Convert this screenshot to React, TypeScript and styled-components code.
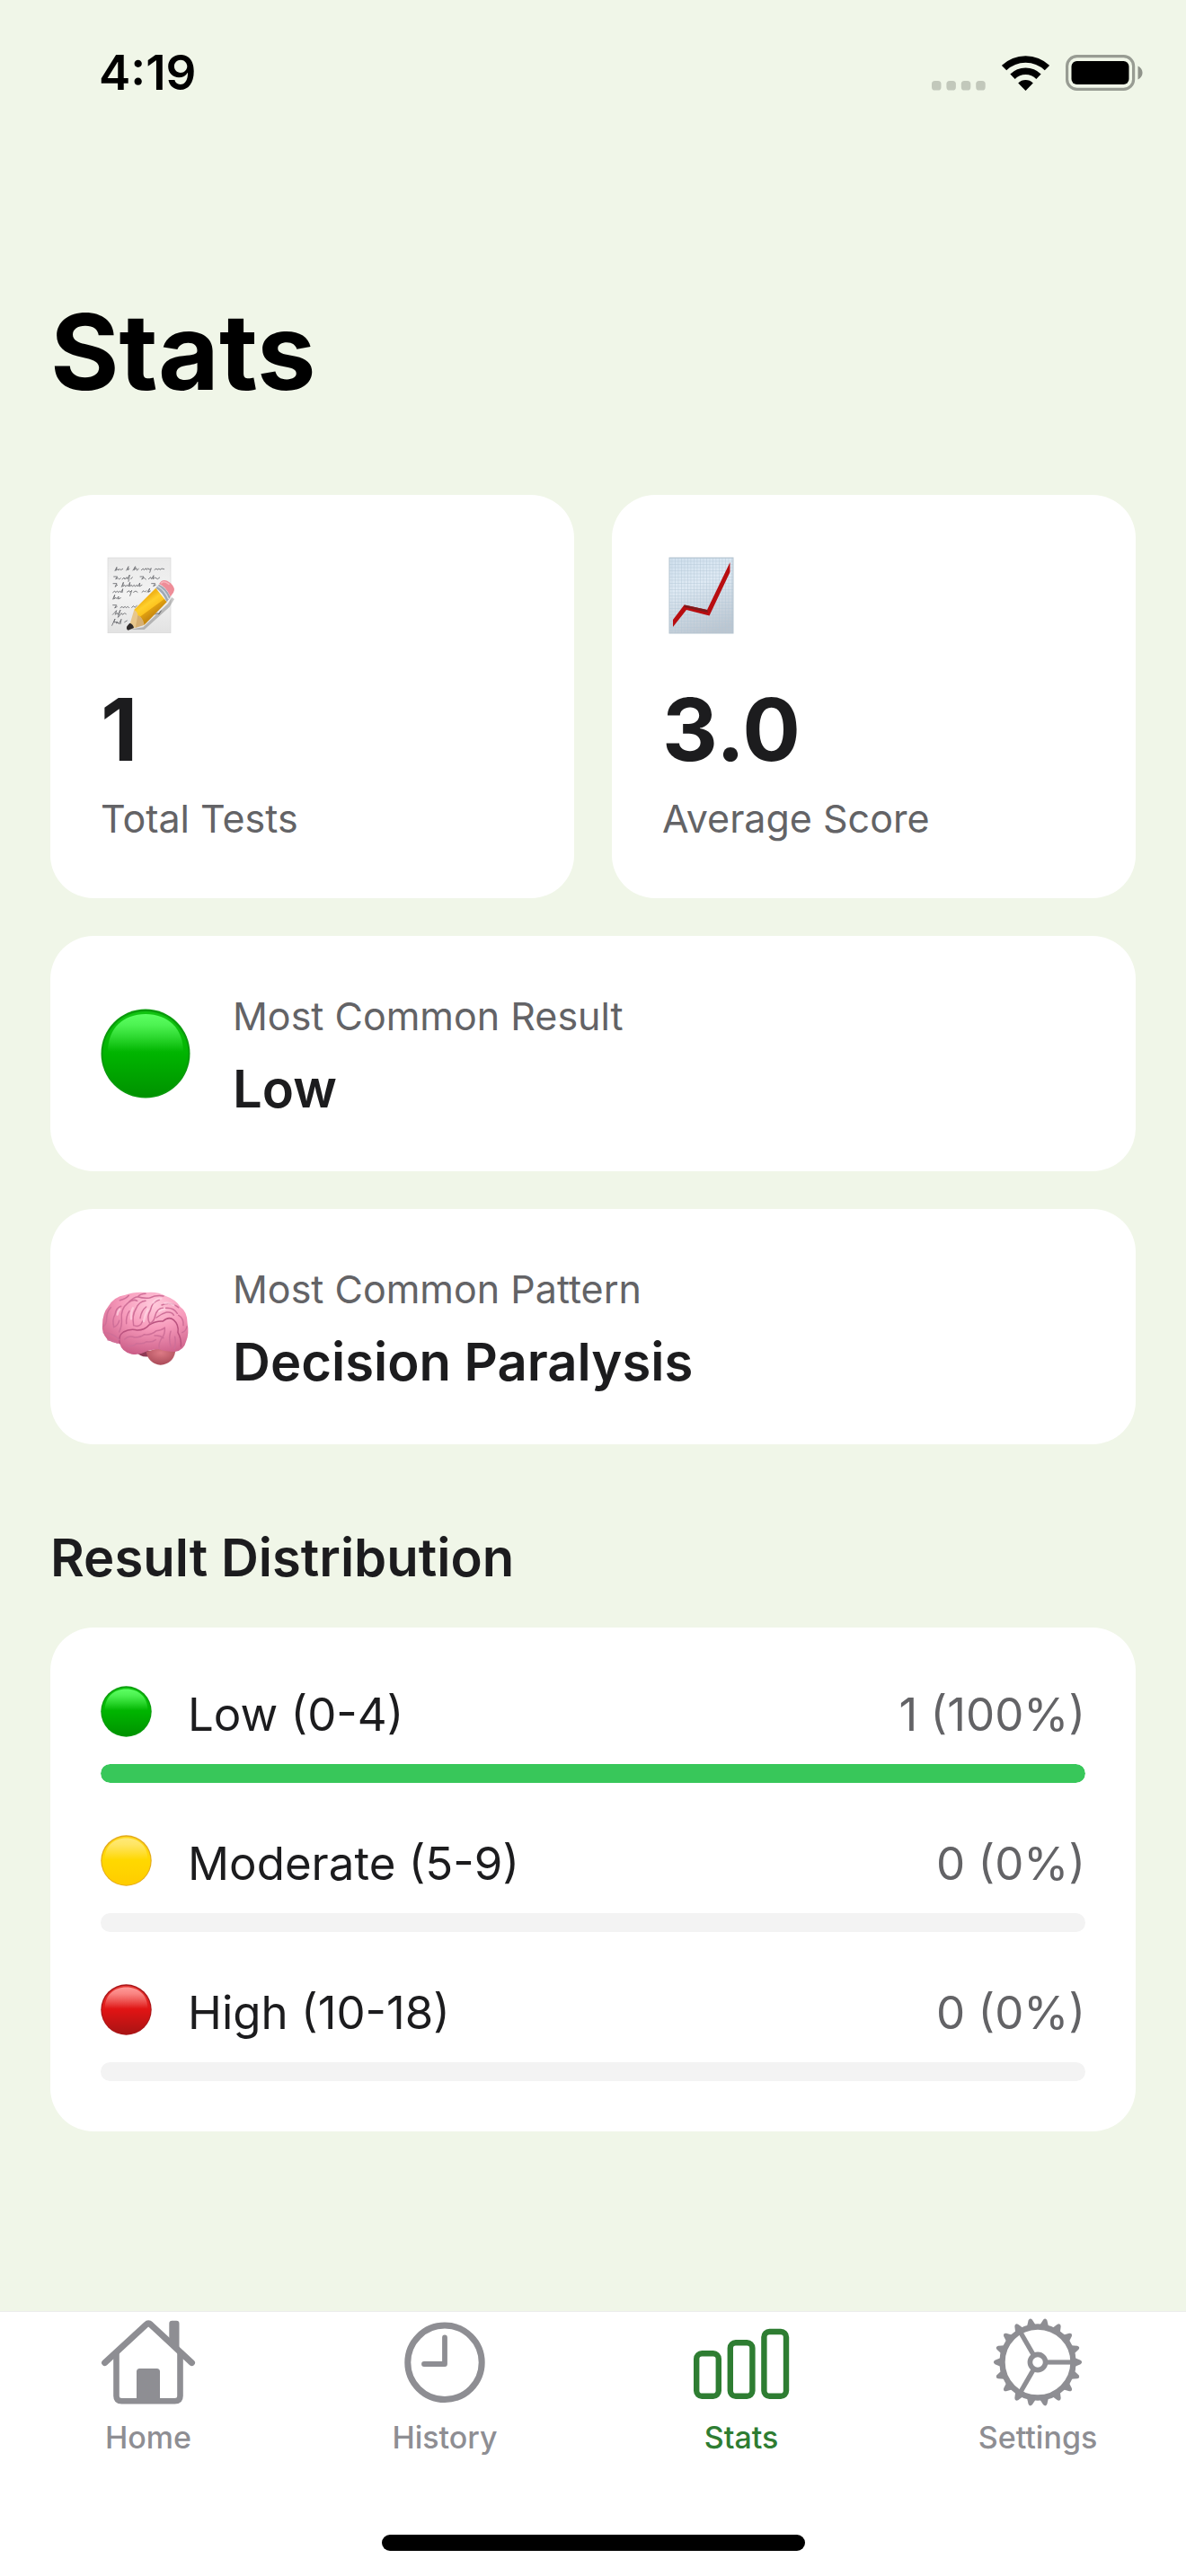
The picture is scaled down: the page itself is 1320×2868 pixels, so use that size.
import React, { useId } from "react";
import styled, { createGlobalStyle } from "styled-components";

const color = {
  page: "#f0f6e8",
  card: "#ffffff",
  ink: "#1c1c1e",
  muted: "#636366",
  track: "#f3f3f3",
  tab: "#8e8e93",
  accent: "#2e7d32",
};

const GlobalStyle = createGlobalStyle`
  *, *::before, *::after { box-sizing: border-box; }
  body {
    margin: 0;
    background: ${color.page};
    color: ${color.ink};
    font-family: Inter, "Liberation Sans", sans-serif;
  }
  svg { display: block; flex: none; }
`;

const Screen = styled.div`
  min-height: 100vh;
  display: flex;
  flex-direction: column;
`;

const StatusBar = styled.header`
  height: 162px;
  padding: 0 48px 0 110px;
  display: flex;
  align-items: center;
  justify-content: space-between;
`;

const Clock = styled.time`
  font-size: 53px;
  line-height: 64px;
  font-weight: 600;
  color: #000;
`;

const StatusIcons = styled.div`
  display: flex;
  align-items: center;
  gap: 18px;
`;

const Content = styled.main`
  flex: 1;
  padding: 160px 56px 56px;
  display: flex;
  flex-direction: column;
  gap: 42px;
`;

const PageTitle = styled.h1`
  margin: 0 0 47px;
  font-size: 117px;
  line-height: 140px;
  font-weight: 700;
  color: #000;
`;

const Card = styled.section`
  background: ${color.card};
  border-radius: 48px;
  padding: 56px;
`;

const StatGrid = styled.div`
  display: grid;
  grid-template-columns: 1fr 1fr;
  gap: 42px;
`;

const StatIcon = styled.div`
  margin-bottom: 36px;
`;

const StatValue = styled.div`
  font-size: 96px;
  line-height: 115px;
  font-weight: 700;
  margin-bottom: 8px;
`;

const Caption = styled.div`
  font-size: 43px;
  line-height: 66px;
  color: ${color.muted};
`;

const HighlightCard = styled(Card)`
  display: flex;
  align-items: center;
  gap: 47px;
`;

const HighlightText = styled.div`
  display: flex;
  flex-direction: column;
  gap: 12px;
`;

const HighlightValue = styled.div`
  font-size: 58px;
  line-height: 72px;
  font-weight: 600;
`;

const SectionTitle = styled.h2`
  margin: 48px 0 0;
  font-size: 58px;
  line-height: 72px;
  font-weight: 600;
`;

const Distribution = styled.ul`
  margin: 0;
  padding: 0;
  list-style: none;
  display: flex;
  flex-direction: column;
  gap: 49px;
`;

const LevelRow = styled.li`
  display: flex;
  flex-direction: column;
  gap: 14px;
`;

const LevelHeader = styled.div`
  display: flex;
  align-items: center;
  gap: 40px;
  font-size: 51px;
  line-height: 82px;
`;

const LevelCount = styled.span`
  margin-left: auto;
  color: ${color.muted};
`;

const Track = styled.div`
  height: 21px;
  border-radius: 11px;
  background: ${color.track};
  overflow: hidden;
`;

const Fill = styled.div<{ $color: string }>`
  height: 100%;
  border-radius: 11px;
  background: ${(p) => p.$color};
`;

const BottomBar = styled.footer`
  background: #fff;
  border-top: 1px solid #ececec;
  padding: 4px 0 28px;
  display: flex;
  flex-direction: column;
  align-items: center;
  gap: 88px;
`;

const Tabs = styled.nav`
  width: 100%;
  display: grid;
  grid-template-columns: repeat(4, 1fr);
`;

const Tab = styled.a<{ $active?: boolean }>`
  display: flex;
  flex-direction: column;
  align-items: center;
  gap: 12px;
  color: ${(p) => (p.$active ? color.accent : color.tab)};
  text-decoration: none;
  font-size: 34px;
  line-height: 40px;
  font-weight: 500;
`;

const HomeIndicator = styled.div`
  width: 471px;
  height: 18px;
  border-radius: 9px;
  background: #000;
`;

function SignalDots() {
  return (
    <svg width="60" height="40" viewBox="0 0 60 40" fill="#c2c8bb" aria-hidden="true">
      {[0, 16.4, 32.8, 49.2].map((x) => (
        <rect key={x} x={x} y="29" width="10.5" height="10.5" rx="3.6" />
      ))}
    </svg>
  );
}

function WifiIcon() {
  return (
    <svg width="53" height="40" viewBox="0 0 53 40" aria-hidden="true">
      <g fill="none" stroke="#000" strokeWidth="7.6">
        <path d="M2.6 14.6A34.5 34.5 0 0 1 50.4 14.6" />
        <path d="M12 24.2A20.6 20.6 0 0 1 41 24.2" />
      </g>
      <path d="M26.5 40L18.2 31.4a11.8 11.8 0 0 1 16.6 0z" fill="#000" />
    </svg>
  );
}

function BatteryIcon() {
  return (
    <svg width="86" height="40" viewBox="0 0 86 40" aria-hidden="true">
      <rect x="1.6" y="1.6" width="74" height="36.8" rx="11" fill="none" stroke="#989c93" strokeWidth="3.2" />
      <rect x="6.5" y="7" width="64" height="26" rx="6" fill="#000" />
      <path d="M80.500 12.500c3 1.200 5 4.200 5 7.500s-2 6.300-5 7.500z" fill="#8f938a" />
    </svg>
  );
}

type BallTone = "green" | "yellow" | "red";

const ballTones: Record<BallTone, { stops: string[]; edge: string; shine: string }> = {
  green: { stops: ["#12c412", "#00b400", "#009200"], edge: "#0a9a0c", shine: "#5cff62" },
  yellow: { stops: ["#ffd81c", "#ffd800", "#ffcc00"], edge: "#e3a91a", shine: "#ffe978" },
  red: { stops: ["#e63a36", "#e01414", "#a81414"], edge: "#a91518", shine: "#ff9a98" },
};

function Ball({ tone, size, height }: { tone: BallTone; size: number; height: number }) {
  const id = useId();
  const { stops, edge, shine } = ballTones[tone];
  return (
    <svg width={size} height={height} viewBox={`0 0 100 ${(height / size) * 100}`} aria-hidden="true">
      <defs>
        <linearGradient id={`${id}b`} x1="0" y1="0" x2="0" y2="1">
          <stop offset="0" stopColor={stops[0]} />
          <stop offset="0.5" stopColor={stops[1]} />
          <stop offset="1" stopColor={stops[2]} />
        </linearGradient>
        <linearGradient id={`${id}s`} x1="0" y1="0" x2="0" y2="1">
          <stop offset="0" stopColor={shine} />
          <stop offset="0.3" stopColor={shine} stopOpacity="0.8" />
          <stop offset="1" stopColor={shine} stopOpacity="0" />
        </linearGradient>
      </defs>
      <circle cx="50" cy="50" r="49.5" fill={edge} />
      <circle cx="50" cy="50.5" r="47.5" fill={`url(#${id}b)`} />
      <path d="M8 48C8 22 25 6 50 6s42 16 42 42z" fill={`url(#${id}s)`} />
    </svg>
  );
}

function MemoIcon() {
  const id = useId();
  return (
    <svg width="96" height="112" viewBox="66 21 288 336" aria-hidden="true">
      <defs>
        <linearGradient id={`${id}p`} x1="0" y1="0" x2="0" y2="1">
          <stop offset="0" stopColor="#e9e9e9" />
          <stop offset="0.5" stopColor="#f3f3f3" />
          <stop offset="1" stopColor="#e2e2e2" />
        </linearGradient>
        <linearGradient id={`${id}y`} x1="215" y1="200" x2="250" y2="248" gradientUnits="userSpaceOnUse">
          <stop offset="0" stopColor="#f2b418" />
          <stop offset="0.3" stopColor="#ffd02c" />
          <stop offset="0.62" stopColor="#fdc41f" />
          <stop offset="0.66" stopColor="#e0a010" />
          <stop offset="1" stopColor="#c98a10" />
        </linearGradient>
      </defs>
      <rect x="90" y="63" width="210" height="251" fill={`url(#${id}p)`} stroke="#d8d8d8" strokeWidth="2" />
      <g fill="none" stroke="#6a6b6f" strokeWidth="2.6" strokeLinecap="round" strokeLinejoin="round">
        <path d="M114 106l6-12-3 12 6-6 2 5 5-5 3 4 7-4M152 105l7-13-3 12 6-4M174 105l8-13-4 12 7-7 2 8 6-5M202 104l6-5 3 5 6-6 2 5 6-5 3 5 7-5-5 14M246 103l6-4 3 4 6-4 3 4 6-4 8 2" />
        <path d="M110 126h12l-6 8 8-3 4 4 5-4M138 135l6-6 3 6 6-7 2 6 8-14-4 22M167 134l5-6M198 126h12l-7 9 8-5 6 5M226 134l7-6 3 6 7-12-2 12 7-5 8 5 7-5" />
        <path d="M108 149h12l-6 11 8-6M136 160l6-15-2 14 6-5 3 5 6-5 3 5 6-14-2 14 7-5 3 5 6-5 3 5 6-5 3 5 7-12-2 12 9-5M236 149h12l-6 9 8-4" />
        <path d="M107 179l6-5 3 5 6-5 3 5 6-5 3 5 6-12-2 12M154 178l7-5 3 5 6-6-6 18M176 178l7-4 6 4M204 178l6-5 4 4 5-4M222 178l8-13-4 13 6-4" />
        <path d="M107 201l6-14-3 14 7-5 3 4 6-8-1 9 8-4" />
        <path d="M107 221h12l-6 10 8-5M132 230l6-4 3 4 7-4 3 4 6-4 4 4M170 229l6-5 4 5 7-6" />
        <path d="M106 253l6-6 7-8-4 14 6-6 3 6 8-16-8 25 12-14 3 5 7-5 5 3M248 252l8-4 4 4 8-12" />
        <path d="M104 289l10-22-4 12 12-2-4 5 6-3 3 5 8-16-3 16M146 278l8-5" />
      </g>
      <path d="M160 303l48-8 82-78 14-22 8 6-16 26-84 76z" fill="#000" opacity="0.22" />
      <path d="M178 236l72-72 37 47-75 76-14 1-12-32z" fill={`url(#${id}y)`} />
      <path d="M178 236q12 8 12 19 15 4 22 32l-54 17z" fill="#e8c78c" />
      <path d="M190 255q15 4 22 32l-30 10z" fill="#cfa566" opacity="0.7" />
      <path d="M163 281q12 4 14 16l-19 8q-8-3-4-13z" fill="#2e2a2a" />
      <path d="M250 164l11-12q24 10 38 42l-12 17q-14-34-37-47z" fill="#9fa8b4" />
      <path d="M256 158q24 12 37 43" fill="none" stroke="#d5dbe2" strokeWidth="4" />
      <path d="M261 150l7-8q12-11 32 6 18 18 9 31l-10 14q-14-33-38-43z" fill="#ee8d98" />
      <path d="M269 147q8-9 25 4" fill="none" stroke="#f8b4bb" strokeWidth="5" strokeLinecap="round" />
    </svg>
  );
}

function ChartIcon() {
  const id = useId();
  return (
    <svg width="96" height="112" viewBox="0 0 96 112" aria-hidden="true">
      <defs>
        <linearGradient id={`${id}g`} x1="0.3" y1="0" x2="0.6" y2="1">
          <stop offset="0" stopColor="#d3e2ef" />
          <stop offset="0.35" stopColor="#dfeaf4" />
          <stop offset="1" stopColor="#bcc6d0" />
        </linearGradient>
        <pattern id={`${id}l`} width="3.5" height="3.5" patternUnits="userSpaceOnUse">
          <path d="M0 0H3.500M0 0V3.500" stroke="#b4c6d5" strokeWidth="0.8" />
        </pattern>
      </defs>
      <rect x="8" y="14" width="71" height="84" fill={`url(#${id}g)`} />
      <rect x="8" y="14" width="71" height="84" fill={`url(#${id}l)`} stroke="#b4c3cf" />
      <path d="M12 83L24.500 66.500 50 72 75.500 19V30L52.500 78.500 27 72 12 91z" fill="#b80d10" />
      <path d="M24.500 66.500L50 72 51 75 25 69z" fill="#7c1a1c" />
    </svg>
  );
}

function BrainIcon() {
  const id = useId();
  return (
    <svg width="100" height="100" viewBox="36 6 300 300" aria-hidden="true">
      <defs>
        <radialGradient id={`${id}b`} cx="0.6" cy="0.2" r="0.85">
          <stop offset="0" stopColor="#ffcbdc" />
          <stop offset="0.45" stopColor="#f79abb" />
          <stop offset="1" stopColor="#c95b85" />
        </radialGradient>
        <radialGradient id={`${id}s`} cx="0.5" cy="0.3" r="0.7">
          <stop offset="0" stopColor="#dd7a85" />
          <stop offset="1" stopColor="#a94a58" />
        </radialGradient>
      </defs>
      <path d="M150 236q20 24 46 20l4-20z" fill="#8e3a55" />
      <path d="M188 240q8 40 48 44 42-2 50-46l-50-12z" fill={`url(#${id}s)`} />
      <path
        d="M100 213Q72 210 58 198 38 176 42 150 42 112 62 88 80 56 118 50 150 38 190 42 226 38 254 54 288 66 302 90 326 106 326 146 332 178 322 204 314 236 284 240 254 240 232 232 204 232 186 240 166 252 140 248 106 240 100 213z"
        fill={`url(#${id}b)`}
      />
      <g fill="none" stroke="#cf6f98" strokeWidth="4.5" strokeLinecap="round" strokeLinejoin="round">
        <path d="M100 212Q94 186 112 174 134 162 158 168 184 168 198 150 222 136 244 138 264 120 280 134 298 150 294 176 306 196 304 222" stroke="#b9527e" />
        <path d="M46 176Q64 176 78 184 92 192 98 200M44 156Q56 150 56 128 56 106 70 92" />
        <path d="M80 158Q74 132 84 116 88 92 104 88M80 158Q94 152 98 136" />
        <path d="M98 174Q108 152 106 132 102 96 128 76 144 62 158 70" />
        <path d="M122 146Q120 122 132 104M146 152Q140 118 154 96 164 72 186 70M146 152Q168 160 176 138" />
        <path d="M168 128Q172 102 188 90M200 146Q188 124 202 102 208 72 232 66M200 146Q214 140 218 120 224 96 244 94" />
        <path d="M222 126Q240 112 256 108 276 106 280 118M240 84Q270 70 296 92M254 94Q280 92 292 112" />
        <path d="M100 68Q120 64 130 52M160 56Q170 46 186 46M200 60Q222 50 246 54M132 72Q146 58 160 56 178 62 200 60" />
        <path d="M296 118Q314 128 312 152M308 176Q322 170 324 156" />
        <path d="M116 198Q130 184 150 192 170 192 182 182 204 186 222 170 240 168 250 160" />
        <path d="M120 218Q142 226 156 212 176 216 190 206 206 210 220 200M250 160Q252 182 238 198 228 216 232 230M270 172Q262 196 270 222M284 190Q288 212 282 230" />
        <path d="M60 200Q76 200 92 210M216 186Q236 184 246 194" />
      </g>
      <g fill="none" stroke="#ffdce8" strokeWidth="7" strokeLinecap="round" opacity="0.65">
        <path d="M138 130Q136 110 144 94M180 138Q184 116 194 98M232 104Q240 98 250 98M212 76Q220 62 238 62M92 116Q94 104 100 98M250 78Q266 74 280 84" />
      </g>
    </svg>
  );
}

function HomeIcon() {
  return (
    <svg width="108" height="104" viewBox="0 0 108 104" fill="none" stroke="currentColor" strokeLinecap="round" strokeLinejoin="round" aria-hidden="true">
      <path d="M5.6 52.6L51.5 10.2Q54.2 7.800 56.900 10.200L102.500 52.600" strokeWidth="7" />
      <path d="M18.500 42V89.500Q18.500 95.300 24.500 95.300H83.500Q89.500 95.300 89.500 89.500V42" strokeWidth="6.6" />
      <path d="M41 96V62.500Q41 59 44.500 59H63.500Q67 59 67 62.500V96zM77.300 28V9Q77.300 5.800 80.500 5.800H85.300Q88.500 5.800 88.500 9V39z" fill="currentColor" stroke="none" />
    </svg>
  );
}

function HistoryIcon() {
  return (
    <svg width="108" height="104" viewBox="0 0 108 104" fill="none" stroke="currentColor" strokeLinecap="round" strokeLinejoin="round" aria-hidden="true">
      <circle cx="54" cy="52.3" r="41.2" strokeWidth="7" />
      <path d="M54 24.500V54H31" strokeWidth="5.8" />
    </svg>
  );
}

function StatsIcon() {
  return (
    <svg width="108" height="104" viewBox="0 0 108 104" fill="none" stroke="currentColor" strokeWidth="6.4" aria-hidden="true">
      <rect x="4.2" y="42.2" width="24.6" height="47.6" rx="6" />
      <rect x="41.8" y="30.2" width="24.6" height="59.6" rx="6" />
      <rect x="79.4" y="18" width="24.6" height="71.8" rx="6" />
    </svg>
  );
}

function SettingsIcon() {
  const teeth = Array.from({ length: 18 }, (_, i) => i * 20);
  return (
    <svg width="108" height="104" viewBox="-54 -52 108 104" fill="none" stroke="currentColor" aria-hidden="true">
      <circle r="39.5" strokeWidth="6.4" />
      <circle r="8.6" strokeWidth="5.6" />
      {[0, 120, 240].map((a) => (
        <path key={a} d="M10 0H38" strokeWidth="5.2" transform={`rotate(${a})`} />
      ))}
      {teeth.map((a) => (
        <path key={a} d="M41 -5L47.600 -2.200Q50.600 0 47.600 2.200L41 5z" fill="currentColor" stroke="none" transform={`rotate(${a})`} />
      ))}
    </svg>
  );
}

const stats = [
  { icon: <MemoIcon />, value: "1", label: "Total Tests" },
  { icon: <ChartIcon />, value: "3.0", label: "Average Score" },
];

const highlights = [
  { icon: <Ball tone="green" size={100} height={100} />, label: "Most Common Result", value: "Low" },
  { icon: <BrainIcon />, label: "Most Common Pattern", value: "Decision Paralysis" },
];

const levels: { tone: BallTone; name: string; count: number; percent: number; fill: string }[] = [
  { tone: "green", name: "Low (0-4)", count: 1, percent: 100, fill: "#38c75a" },
  { tone: "yellow", name: "Moderate (5-9)", count: 0, percent: 0, fill: "#ffcc00" },
  { tone: "red", name: "High (10-18)", count: 0, percent: 0, fill: "#ff3b30" },
];

const tabs = [
  { name: "Home", icon: <HomeIcon /> },
  { name: "History", icon: <HistoryIcon /> },
  { name: "Stats", icon: <StatsIcon /> },
  { name: "Settings", icon: <SettingsIcon /> },
];

export default function App() {
  return (
    <Screen>
      <GlobalStyle />
      <StatusBar>
        <Clock>4:19</Clock>
        <StatusIcons>
          <SignalDots />
          <WifiIcon />
          <BatteryIcon />
        </StatusIcons>
      </StatusBar>

      <Content>
        <PageTitle>Stats</PageTitle>

        <StatGrid>
          {stats.map((s) => (
            <Card key={s.label}>
              <StatIcon>{s.icon}</StatIcon>
              <StatValue>{s.value}</StatValue>
              <Caption>{s.label}</Caption>
            </Card>
          ))}
        </StatGrid>

        {highlights.map((h) => (
          <HighlightCard key={h.label}>
            {h.icon}
            <HighlightText>
              <Caption>{h.label}</Caption>
              <HighlightValue>{h.value}</HighlightValue>
            </HighlightText>
          </HighlightCard>
        ))}

        <SectionTitle>Result Distribution</SectionTitle>
        <Card>
          <Distribution>
            {levels.map((l) => (
              <LevelRow key={l.name}>
                <LevelHeader>
                  <Ball tone={l.tone} size={57} height={65} />
                  <span>{l.name}</span>
                  <LevelCount>
                    {l.count} ({l.percent}%)
                  </LevelCount>
                </LevelHeader>
                <Track
                  role="progressbar"
                  aria-label={l.name}
                  aria-valuenow={l.percent}
                  aria-valuemin={0}
                  aria-valuemax={100}
                >
                  <Fill $color={l.fill} style={{ width: `${l.percent}%` }} />
                </Track>
              </LevelRow>
            ))}
          </Distribution>
        </Card>
      </Content>

      <BottomBar>
        <Tabs>
          {tabs.map((t) => (
            <Tab
              key={t.name}
              href={`#${t.name.toLowerCase()}`}
              $active={t.name === "Stats"}
              aria-current={t.name === "Stats" ? "page" : undefined}
            >
              {t.icon}
              {t.name}
            </Tab>
          ))}
        </Tabs>
        <HomeIndicator />
      </BottomBar>
    </Screen>
  );
}
